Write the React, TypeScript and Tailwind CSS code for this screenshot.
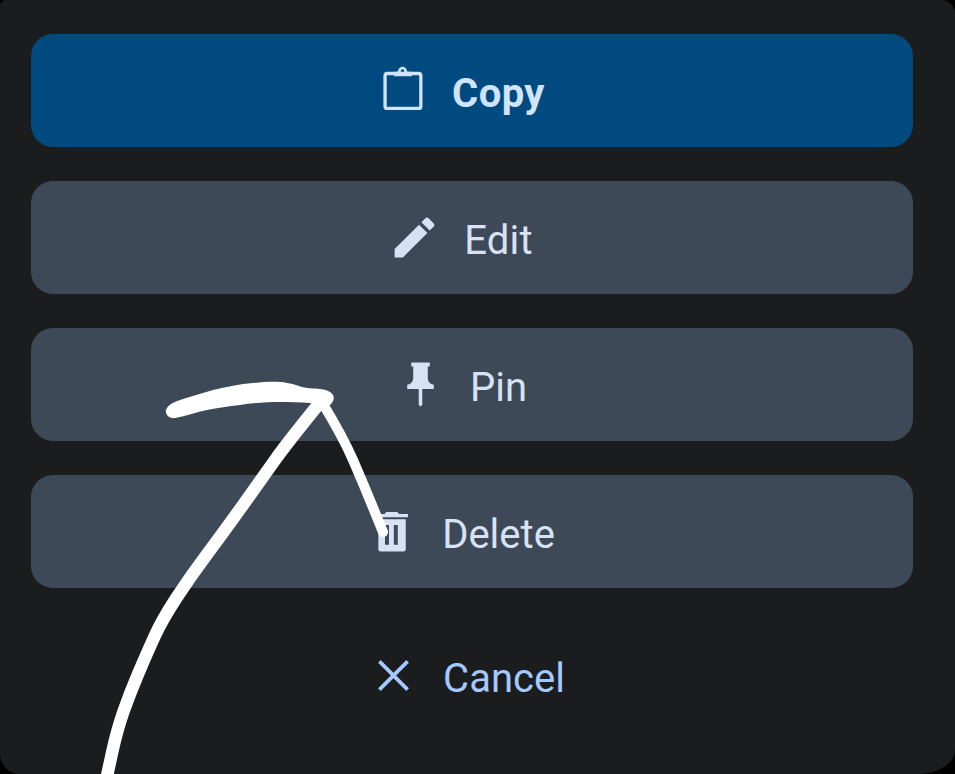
const Btn = ({ bg, color, weight, icon, label, mt }: { bg: string; color: string; weight: string; icon: React.ReactNode; label: string; mt: string }) => (
  <div className={`h-[113px] ${mt} ${bg} ${color} rounded-[22px] flex items-center justify-center gap-[23px] pr-[23px] text-[40px] leading-none`}>
    {icon}
    <span className={`pt-[7px] ${weight}`}>{label}</span>
  </div>
);

const Icon = ({ children }: { children: React.ReactNode }) => (
  <svg viewBox="0 0 24 24" className="w-[53px] h-[53px] shrink-0" fill="currentColor">{children}</svg>
);

const smooth = (p: number[][]) => {
  let d = `M${p[0][0]} ${p[0][1]}`;
  for (let i = 1; i < p.length - 1; i++) {
    const mx = (p[i][0] + p[i + 1][0]) / 2;
    const my = (p[i][1] + p[i + 1][1]) / 2;
    d += `Q${p[i][0]} ${p[i][1]} ${mx} ${my}`;
  }
  const l = p[p.length - 1];
  return d + `L${l[0]} ${l[1]}`;
};

const longStroke = smooth([[322, 400], [287, 443], [263, 477], [223, 533], [190, 577], [162, 620], [147, 653], [130, 693], [117, 730], [107, 776]]);
const rightStroke = smooth([[323, 404], [343, 437], [363, 483], [383, 532]]);

export default function App() {
  return (
    <div className="w-[955px] h-[774px] bg-black overflow-hidden relative" style={{ fontFamily: "Roboto, sans-serif" }}>
      <div className="w-full h-full bg-[#1b1c1e] rounded-tl-[6px] rounded-tr-[14px] rounded-bl-[20px] rounded-br-[37px_24px] pl-[31px] pt-[34px] pr-[42px]">
        <Btn mt="" bg="bg-[#004a80]" color="text-[#d1e4ff]" weight="font-bold tracking-[0.4px]" label="Copy" icon={
          <Icon>
            <rect x="4.1" y="4.3" width="16.2" height="15.8" rx="1" fill="none" stroke="currentColor" strokeWidth="1.5" />
            <path fillRule="evenodd" d="M8.2 3.5H9.8C10.1 2 11 1.2 12 1.2S13.9 2 14.2 3.5H16.2V5.6H8.2ZM12 2.4A.8.8 0 1 0 12 4A.8.8 0 1 0 12 2.4Z" />
          </Icon>
        } />
        <Btn mt="mt-[34px]" bg="bg-[#3e4958]" color="text-[#d7e2f5]" weight="font-normal tracking-[0.2px]" label="Edit" icon={
          <Icon><path d="M3 17.25V21h3.75L17.81 9.94l-3.75-3.75L3 17.25zM20.71 7.04c.39-.39.39-1.02 0-1.41l-2.34-2.34c-.39-.39-1.02-.39-1.41 0l-1.83 1.83 3.75 3.75 1.83-1.83z" /></Icon>
        } />
        <Btn mt="mt-[34px]" bg="bg-[#3e4958]" color="text-[#d7e2f5]" weight="font-normal" label="Pin" icon={
          <Icon><path d="M15.3 9V3.9H16.2V2H7.8V3.9H8.7V9C8.7 10.66 7.5 12 6 12V14H11.2V21.2L12 22L12.8 21.2V14H18V12C16.5 12 15.3 10.66 15.3 9Z" /></Icon>
        } />
        <Btn mt="mt-[34px]" bg="bg-[#3e4958]" color="text-[#d7e2f5]" weight="font-normal" label="Delete" icon={
          <Icon>
            <path fillRule="evenodd" d="M5.6 6.4H18V20C18 20.6 17.6 21 17 21H6.6C6 21 5.6 20.6 5.6 20ZM8.6 9V18H10.4V9ZM12.6 9V18H14.4V9Z" />
            <path d="M19 4.1h-4l-.8-.9h-5l-.8.9H5v1.4h14V4.1z" />
          </Icon>
        } />
        <div className="h-[113px] mt-[31px] text-[#a3c9ff] flex items-center justify-center gap-[23px] pr-[12px] text-[40px] leading-none">
          <Icon><path d="M19 6.2 17.8 5 12 10.8 6.2 5 5 6.2 10.8 12 5 17.8 6.2 19 12 13.2 17.8 19 19 17.8 13.2 12z" /></Icon>
          <span className="pt-[7px]">Cancel</span>
        </div>
      </div>
      <svg viewBox="0 0 955 774" className="absolute inset-0 w-[955px] h-[774px] pointer-events-none" fill="none" stroke="#ffffff" strokeLinecap="round" strokeLinejoin="round">
        <path stroke="none" fill="#ffffff" d="M166 410C168 404 175 402 180 400C190 397 202 393 213 390C226 387 240 384 253 383C265 382 277 381 287 383C295 384 300 387 307 388C314 389 322 388 328 391C333 393 335 397 333 401C331 405 327 408 323 408C318 407 314 403 310 403C300 402 290 402 280 402C267 402 253 403 240 405C228 406 218 408 207 410C197 412 186 416 175 418C170 419 165 415 166 410Z" />
        <path d={longStroke} strokeWidth="12.5" />
        <path d={rightStroke} strokeWidth="10" />
      </svg>
    </div>
  );
}
